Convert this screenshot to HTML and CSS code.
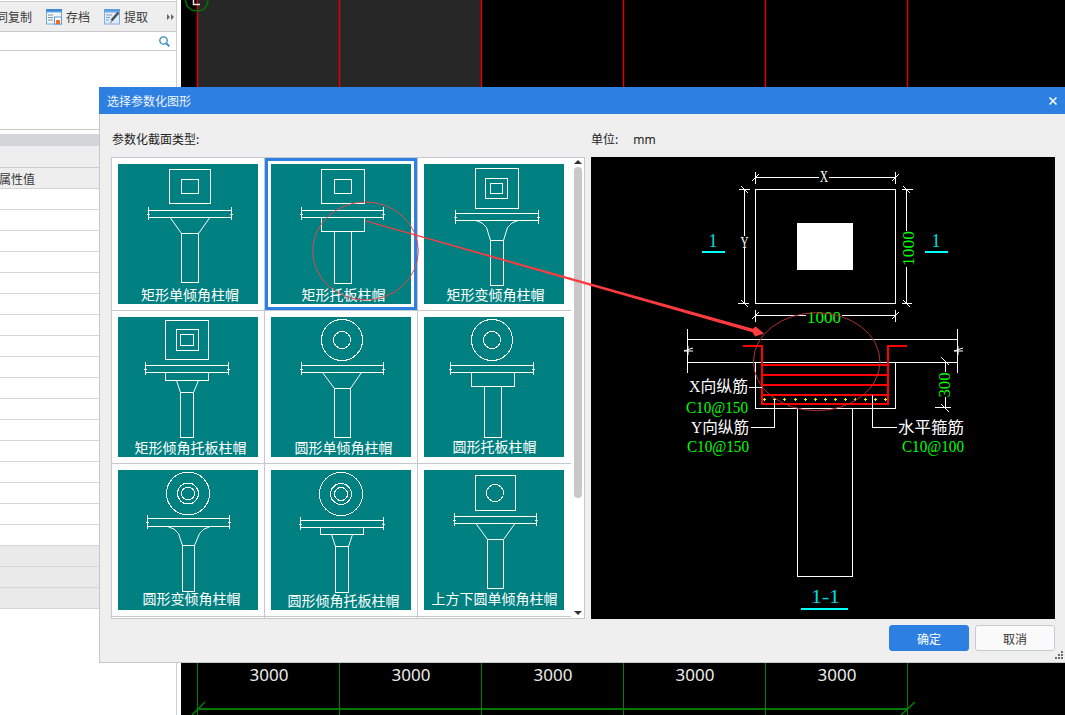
FILE: index.html
```html
<!DOCTYPE html>
<html lang="zh-CN">
<head>
<meta charset="utf-8">
<title>选择参数化图形</title>
<link rel="stylesheet" href="styles.css">
</head>
<body>
<div class="app">
  <aside class="side">
    <div class="side-top"></div>
    <div class="toolbar">
      <span class="tool-text">同复制</span>
      <span class="tool">
        <svg class="tool-icon" viewBox="0 0 16 16" width="16" height="16">
          <rect x="0" y="0" width="16" height="3" fill="#3b8ad9"/>
          <rect x="0.5" y="3" width="15" height="12" fill="#f4f8fc" stroke="#6fa8dc"/>
          <path d="M2 6h5M2 8.5h5M2 11h5" stroke="#7a8a99"/>
          <rect x="8.5" y="8" width="7" height="7" fill="#fff" stroke="#5f9bd3"/>
          <rect x="10" y="11" width="4" height="4" fill="#f26b21"/>
        </svg>
        <span class="tool-text">存档</span>
      </span>
      <span class="tool">
        <svg class="tool-icon" viewBox="0 0 16 16" width="16" height="16">
          <rect x="0" y="0" width="16" height="3" fill="#5b9ee0"/>
          <rect x="0.5" y="3" width="15" height="12" fill="#dfeafa" stroke="#7fb0e0"/>
          <path d="M2 6h6M2 8.5h4M2 11h3" stroke="#8aa0b8"/>
          <path d="M14.5 3.5L7.5 11.5" stroke="#46505c" stroke-width="2.5"/>
          <path d="M7 12l-1 2 2-1z" fill="#46505c"/>
        </svg>
        <span class="tool-text">提取</span>
      </span>
      <span class="tool-more">
        <svg viewBox="0 0 8 8" width="8" height="8"><path d="M0 1l3 3-3 3zM4 1l3 3-3 3z" fill="#666"/></svg>
      </span>
    </div>
    <div class="search">
      <svg viewBox="0 0 11 11" width="11" height="11"><circle cx="4.5" cy="4.5" r="3.7" fill="none" stroke="#2b8bc0" stroke-width="1.3"/><path d="M7.3 7.3L10.3 10.3" stroke="#2b8bc0" stroke-width="1.8"/></svg>
    </div>
    <div class="tree"></div>
    <div class="gap-white"></div>
    <div class="band"></div>
    <div class="spacer-row"></div>
    <div class="head-row"><span class="head-text">属性值</span></div>
    <div class="row"></div><div class="row"></div><div class="row"></div><div class="row"></div>
    <div class="row"></div><div class="row"></div><div class="row"></div><div class="row"></div>
    <div class="row"></div><div class="row"></div><div class="row"></div><div class="row"></div>
    <div class="row"></div><div class="row"></div><div class="row"></div><div class="row"></div>
    <div class="row"></div>
    <div class="row row-grey"></div><div class="row row-grey"></div><div class="row row-grey"></div>
  </aside>
  <div class="gutter"></div>
  <main class="canvas">
    <svg class="cad" viewBox="181 0 884 715" width="884" height="715">
      <rect x="198" y="0" width="283" height="100" fill="#272727"/>
      <path class="cad-red" d="M197.500 0V100M339.500 0V100M481.500 0V100M623.500 0V100M765.500 0V100M907.500 0V100"/>
      <path class="cad-green" d="M184.500 -3L187 6L192 10L197 11L203 10L207 5L208.500 -3"/>
      <path class="cad-l" d="M193.500 0V4.500H200"/>
      <path class="cad-green-v" d="M197.500 663V715M339.500 663V715M481.500 663V715M623.500 663V715M765.500 663V715M907.500 663V715"/>
      <path class="cad-green-h" d="M197 709H908"/>
      <path class="cad-green-t" d="M192 715L205 702M901 715L915 702"/>
      <text class="cad-num" x="269" y="680.500">3000</text>
      <text class="cad-num" x="411" y="680.500">3000</text>
      <text class="cad-num" x="553" y="680.500">3000</text>
      <text class="cad-num" x="695" y="680.500">3000</text>
      <text class="cad-num" x="837" y="680.500">3000</text>
    </svg>
  </main>
</div>

<section class="dialog">
  <header class="dialog-title">
    <span>选择参数化图形</span>
    <svg class="close" viewBox="0 0 8 8" width="8" height="8"><path d="M0.500 0.500L7.500 7.500M7.500 0.500L0.500 7.500" stroke="#fff" stroke-width="1.500"/></svg>
  </header>
  <div class="dialog-body">
    <div class="col-left">
      <div class="label label-left">参数化截面类型:</div>
      <div class="picker">
        <div class="grid">
          <div class="cell">
            <svg class="thumb" viewBox="0 0 140 140" width="140" height="140">
              <path class="ln" d="M51.500 5.500h41v34h-41zM63.500 15.500h17v14h-17zM30.500 46.500h83v7h-83zM30.500 43V56M113.500 43V56M29 50h3M112 50h3M63.500 69.500h17v49h-17z"/>
              <path class="ln-aa" d="M52.500 54L63.500 69.500M91.500 54L80.500 69.500"/>
              <text class="cap" x="72" y="135.500">矩形单倾角柱帽</text>
            </svg>
          </div>
          <div class="cell selected">
            <svg class="thumb" viewBox="0 0 140 140" width="140" height="140">
              <path class="ln" d="M50.500 5.500h43v34h-43zM63.500 15.500h17v14h-17zM30.500 46.500h82v7h-82zM30.500 43V56M112.500 43V56M29 50h3M111 50h3M50.500 53.500h43v14h-43zM63.500 67.500h17v52h-17z"/>
              <text class="cap" x="72.500" y="135.500">矩形托板柱帽</text>
            </svg>
          </div>
          <div class="cell">
            <svg class="thumb" viewBox="0 0 140 140" width="140" height="140">
              <path class="ln" d="M51.500 4.500h43v40h-43zM61.500 14.500h22v20h-22zM66.500 19.500h12v10h-12zM31.500 49.500h83v7h-83zM31.500 46V60M114.500 46V60M30 53h3M113 53h3M66.500 76.500h13v45h-13z"/>
              <path class="ln-aa" d="M52 56.500L58 59L62.500 63.500L66.500 76.500M94 56.500L88 59L83.500 63.500L79.500 76.500"/>
              <text class="cap" x="71.500" y="135.500">矩形变倾角柱帽</text>
            </svg>
          </div>
          <div class="cell">
            <svg class="thumb" viewBox="0 0 140 140" width="140" height="140">
              <path class="ln" d="M47.500 3.500h43v39h-43zM58.500 12.500h22v21h-22zM62.500 17.500h13v11h-13zM27.500 48.500h83v7h-83zM27.500 45V58M110.500 45V58M26 52h3M109 52h3M47.500 55.500h43v8h-43zM62.500 75.500h13v45h-13z"/>
              <path class="ln-aa" d="M58.500 63.500L62.500 75.500M80.500 63.500L75.500 75.500"/>
              <text class="cap" x="72.500" y="135.500">矩形倾角托板柱帽</text>
            </svg>
          </div>
          <div class="cell">
            <svg class="thumb" viewBox="0 0 140 140" width="140" height="140">
              <circle class="ln" cx="71" cy="23" r="20.500"/>
              <circle class="ln" cx="71" cy="23" r="8.500"/>
              <path class="ln" d="M30.500 48.500h82v7h-82zM30.500 45V58M112.500 45V58M29 52h3M111 52h3M63.500 71.500h16v49h-16z"/>
              <path class="ln-aa" d="M51.500 55.500L63.500 71.500M90.500 55.500L79.500 71.500"/>
              <text class="cap" x="72.500" y="135.500">圆形单倾角柱帽</text>
            </svg>
          </div>
          <div class="cell">
            <svg class="thumb" viewBox="0 0 140 140" width="140" height="140">
              <circle class="ln" cx="68" cy="23" r="20.500"/>
              <circle class="ln" cx="68" cy="23" r="8.500"/>
              <path class="ln" d="M26.500 48.500h83v7h-83zM26.500 45V58M109.500 45V58M25 52h3M108 52h3M47.500 55.500h43v14h-43zM60.500 69.500h17v51h-17z"/>
              <text class="cap" x="70.500" y="135">圆形托板柱帽</text>
            </svg>
          </div>
          <div class="cell">
            <svg class="thumb" viewBox="0 0 140 140" width="140" height="140">
              <circle class="ln" cx="70" cy="23.500" r="21.500"/>
              <circle class="ln" cx="70" cy="23.500" r="10.500"/>
              <circle class="ln" cx="70" cy="23.500" r="6.500"/>
              <path class="ln" d="M29.500 48.500h82v8h-82zM29.500 45V59M111.500 45V59M28 52h3M110 52h3M64.500 75.500h12v46h-12z"/>
              <path class="ln-aa" d="M50.500 57L56 59L60.500 63.500L64.500 75.500M91.500 57L86 59L81.500 63.500L76.500 75.500"/>
              <text class="cap" x="73.500" y="134">圆形变倾角柱帽</text>
            </svg>
          </div>
          <div class="cell">
            <svg class="thumb" viewBox="0 0 140 140" width="140" height="140">
              <circle class="ln" cx="70" cy="24" r="21.500"/>
              <circle class="ln" cx="70" cy="24" r="10.500"/>
              <circle class="ln" cx="70" cy="24" r="6.500"/>
              <path class="ln" d="M29.500 50.500h83v7h-83zM29.500 47V60M112.500 47V60M28 54h3M111 54h3M49.500 57.500h43v7h-43zM64.500 76.500h13v46h-13z"/>
              <path class="ln-aa" d="M60.500 64.500L64.500 76.500M81.500 64.500L77.500 76.500"/>
              <text class="cap" x="72.500" y="136">圆形倾角托板柱帽</text>
            </svg>
          </div>
          <div class="cell">
            <svg class="thumb" viewBox="0 0 140 140" width="140" height="140">
              <path class="ln" d="M51.500 5.500h40v35h-40zM30.500 46.500h82v7h-82zM30.500 43V56M112.500 43V56M29 50h3M111 50h3M63.500 69.500h16v49h-16z"/>
              <circle class="ln" cx="71" cy="23" r="8.500"/>
              <path class="ln-aa" d="M52 53.500L63.500 69.500M91 53.500L79.500 69.500"/>
              <text class="cap" x="70.500" y="134">上方下圆单倾角柱帽</text>
            </svg>
          </div>
          <div class="cell"></div>
          <div class="cell"></div>
          <div class="cell"></div>
        </div>
        <div class="scroll">
          <span class="arrow-up"></span>
          <span class="scroll-thumb"></span>
          <span class="arrow-down"></span>
        </div>
      </div>
    </div>
    <div class="col-right">
      <div class="label"><span class="unit-key">单位:</span><span class="unit-val">mm</span></div>
      <svg class="preview" viewBox="591 157 464 462" width="464" height="462">
        <path class="w" d="M755.500 189.500h140v114h-140z"/>
        <rect x="797" y="223" width="56" height="47" fill="#fff"/>
        <path class="w" d="M755.500 177.500h63M829 177.500h66.500M755.500 172V184M895.500 172V184M752 181L759 174M892 181L899 174"/>
        <path class="w" d="M744.500 189.500V236M744.500 248V303.500M739 189.500h11M738 303.500h11M741 186L748 193M741 300L748 307"/>
        <path class="w" d="M906.500 189.500V231M906.500 267V303.500M902 189.500h11M902 303.500h10M903 186L910 193M903 300L910 307"/>
        <path class="w" d="M755.500 315.500H806M842 315.500H895.500M755.500 310V322M895.500 310V322M752 319L759 312M892 319L899 312"/>
        <text class="t-w" x="820" y="182" textLength="8" lengthAdjust="spacingAndGlyphs">X</text>
        <text class="t-w" x="740.500" y="248" textLength="8" lengthAdjust="spacingAndGlyphs">Y</text>
        <text class="t-g" x="807" y="322.500" textLength="34" lengthAdjust="spacingAndGlyphs">1000</text>
        <text class="t-g" transform="translate(913.500 266) rotate(-90)" x="0" y="0" textLength="35" lengthAdjust="spacingAndGlyphs">1000</text>
        <text class="t-c t-mid" x="713" y="247">1</text>
        <text class="t-c t-mid" x="936" y="247">1</text>
        <path class="c" d="M702 251.500h23M925 251.500h23M801 608.500h47"/>
        <path class="w" d="M687.500 339.500h270M687.500 362.500h270M687.500 329V373M957.500 329V373"/>
        <path class="wa" d="M693 348L684 351H693M688 346L688 355M963 348L954 351H963M958 346L958 355"/>
        <path class="w" d="M755.500 362.500V408.500H895.500V362.500M797.500 408.500V576.500H852.500V408.500"/>
        <path class="r" d="M743 345.500H762V403.500H888V345.500H907M762 365H888M762 375H888M762 385H888M762 394.500H888"/>
        <path class="y" d="M762.500 399.500h3M764 398v3M772.500 399.500h3M774 398v3M782.500 399.500h3M784 398v3M793.500 399.500h3M795 398v3M803.500 399.500h3M805 398v3M813.500 399.500h3M815 398v3M823.500 399.500h3M825 398v3M833.500 399.500h3M835 398v3M843.500 399.500h3M845 398v3M853.500 399.500h3M855 398v3M863.500 399.500h3M865 398v3M873.500 399.500h3M875 398v3M883.500 399.500h3M885 398v3"/>
        <path class="w" d="M749 387.500H762M751 427.500H774.500V399M872.500 394.500V427.500H896.500"/>
        <path class="w" d="M945.500 362V372M945.500 397V408M935 407.500H951M941 357L949 365M941 404L949 412M940 362.500h17"/>
        <text class="t-g" transform="translate(950 397.500) rotate(-90)" x="0" y="0" textLength="25" lengthAdjust="spacingAndGlyphs">300</text>
        <text class="t-w" x="689" y="392" textLength="59" lengthAdjust="spacingAndGlyphs">X向纵筋</text>
        <text class="t-g" x="686" y="412.500" textLength="62" lengthAdjust="spacingAndGlyphs">C10@150</text>
        <text class="t-w" x="691" y="432.500" textLength="58" lengthAdjust="spacingAndGlyphs">Y向纵筋</text>
        <text class="t-g" x="687" y="451.500" textLength="62" lengthAdjust="spacingAndGlyphs">C10@150</text>
        <text class="t-w" x="898" y="432.500" textLength="66" lengthAdjust="spacingAndGlyphs">水平箍筋</text>
        <text class="t-g" x="902" y="451.500" textLength="62" lengthAdjust="spacingAndGlyphs">C10@100</text>
        <text class="t-c" x="811" y="603" textLength="29" lengthAdjust="spacingAndGlyphs">1-1</text>
      </svg>
    </div>
  </div>
  <footer class="dialog-foot">
    <button class="btn btn-primary" type="button">确定</button>
    <button class="btn" type="button">取消</button>
  </footer>
  <svg class="grip" viewBox="0 0 8 8" width="8" height="8"><path d="M6 0h2v2H6zM3 3h2v2H3zM6 3h2v2H6zM0 6h2v2H0zM3 6h2v2H3zM6 6h2v2H6z" fill="#6b6b6b"/></svg>
</section>

<svg class="markup" viewBox="0 0 1065 715" width="1065" height="715">
  <ellipse class="mark-ring" cx="365.500" cy="251" rx="52.800" ry="49"/>
  <ellipse class="mark-ring mark-dark" cx="816.700" cy="361.700" rx="63.300" ry="49"/>
  <path class="mark-arrow" d="M365 220.200L365 221.200L752.500 332.200L755 336.500L764 333.500L755.500 326.500L753 328.800Z"/>
</svg>
</body>
</html>
```
FILE: styles.css
```css
* { box-sizing: border-box; }
html, body { margin: 0; padding: 0; height: 100%; overflow: hidden; background: #fff; }
body { position: relative; width: 1065px; height: 715px; font-family: "Noto Sans CJK SC", "Liberation Sans", sans-serif; font-size: 12px; color: #333; }

.app { display: flex; height: 715px; }
.side { width: 177px; flex: none; border-right: 1px solid #ccced2; overflow: hidden; background: #fff; }
.gutter { width: 4px; flex: none; background: #fff; }
.canvas { flex: 1; background: #000; overflow: hidden; min-width: 0; }
.cad { display: block; }

.side-top { height: 2px; border-bottom: 1px solid #ccc; }
.toolbar { height: 30px; display: flex; align-items: center; justify-content: flex-end; padding-right: 1px; background: #eee; border-bottom: 1px solid #c8c8c8; white-space: nowrap; overflow: hidden; }
.tool { display: flex; align-items: center; gap: 4px; margin-left: 14px; flex: none; }
.tool-text { flex: none; color: #3a3a3a; line-height: 16px; }
.tool-icon { display: block; }
.tool-more { margin-left: 19px; width: 8px; display: flex; flex: none; }
.search { height: 19px; display: flex; align-items: center; justify-content: flex-end; padding-right: 6px; background: #fff; border-bottom: 1px solid #ccc; }
.tree { height: 79px; border-bottom: 1px solid #ccc; }
.gap-white { height: 4px; }
.band { height: 12px; background: #d4d5d9; }
.spacer-row { height: 22px; background: #eee; border-bottom: 1px solid #ccc; }
.head-row { height: 21px; background: #eee; border-bottom: 1px solid #d4d4d4; display: flex; align-items: center; }
.head-text { margin-left: -1px; color: #3a3a3a; }
.row { height: 21px; border-bottom: 1px solid #d6d6d6; background: #fff; }
.row-grey { background: #eaeaea; }

.dialog { position: absolute; left: 99px; top: 87px; width: 966px; height: 576px; background: #efefef; border-left: 1px solid #c3c8d3; border-bottom: 1px solid #c3c8d3; display: flex; flex-direction: column; }
.dialog-title { height: 27px; flex: none; background: #2d7fe2; color: #eef5fd; display: flex; align-items: center; justify-content: space-between; padding: 0 8px; margin-left: -1px; line-height: 27px; }
.close { display: block; }
.dialog-body { display: flex; gap: 6px; padding: 0 10px 0 11px; flex: none; }
.label { height: 43px; padding-top: 16px; line-height: 18px; color: #222; }
.label-left { padding-left: 1px; }
.col-left { width: 474px; flex: none; }
.col-right { width: 464px; flex: none; }
.unit-val { margin-left: 15px; font-family: "Noto Sans", sans-serif; font-size: 12px; }

.picker { width: 474px; height: 462px; border: 1px solid #c6c8cd; background: #fff; display: flex; overflow: hidden; }
.grid { width: 459px; height: 460px; flex: none; overflow: hidden; display: grid; grid-template-columns: repeat(3, 153px); grid-auto-rows: 153px; }
.cell { padding: 6px; border-right: 1px solid #c6c8cd; border-bottom: 1px solid #c6c8cd; }
.cell:nth-child(3n) { border-right: 0; }
.cell.selected { box-shadow: inset 0 0 0 3px #2d7fe2; }
.thumb { display: block; background: #008080; }
.ln { fill: none; stroke: #fff; stroke-width: 1; shape-rendering: crispEdges; }
.ln-aa { fill: none; stroke: #fff; stroke-width: 1; }
.cap { fill: #fff; font-size: 14px; text-anchor: middle; font-family: "Noto Sans CJK SC", sans-serif; }

.scroll { flex: 1; display: flex; flex-direction: column; align-items: center; position: relative; }
.scroll-thumb { width: 8px; height: 331px; margin-top: 3px; border-radius: 4px; background: #c8c8c8; }
.arrow-up { margin-top: 2px; width: 0; height: 0; border-left: 4px solid transparent; border-right: 4px solid transparent; border-bottom: 4px solid #333; }
.arrow-down { margin-top: 113px; width: 0; height: 0; border-left: 4px solid transparent; border-right: 4px solid transparent; border-top: 4px solid #333; }

.preview { display: block; background: #000; }
.w { fill: none; stroke: #fff; stroke-width: 1; shape-rendering: crispEdges; }
.wa { fill: none; stroke: #fff; stroke-width: 1; }
.c { fill: none; stroke: #00ffff; stroke-width: 2; shape-rendering: crispEdges; }
.r { fill: none; stroke: #ff0000; stroke-width: 2; shape-rendering: crispEdges; }
.y { fill: none; stroke: #ffff00; stroke-width: 1; shape-rendering: crispEdges; }
.t-w, .t-g, .t-c { font-family: "Liberation Serif", "Noto Sans CJK SC", serif; font-size: 16px; }
.t-w { fill: #fff; }
.t-g { fill: #00ff00; }
.t-c { fill: #00dcdc; font-size: 18px; }
.t-mid { text-anchor: middle; }

.dialog-foot { display: flex; justify-content: flex-end; gap: 6px; padding: 6px 10px 0 0; }
.btn { width: 80px; height: 26px; padding: 0; border: 1px solid #c6cbd6; border-radius: 3px; background: #fafafa; color: #333; font: 12px "Noto Sans CJK SC", sans-serif; }
.btn-primary { background: #2d7fe2; border-color: #2d7fe2; color: #fff; }
.grip { position: absolute; right: 2px; bottom: 3px; display: block; }

.cad-red { fill: none; stroke: #e00000; stroke-width: 1.500; }
.cad-green { fill: none; stroke: #007000; stroke-width: 1.5; }
.cad-l { fill: none; stroke: #e8e8e8; stroke-width: 1.500; }
.cad-green-v { fill: none; stroke: #008000; stroke-width: 1; shape-rendering: crispEdges; }
.cad-green-h { fill: none; stroke: #007800; stroke-width: 2; shape-rendering: crispEdges; }
.cad-green-t { fill: none; stroke: #008000; stroke-width: 1.500; }
.cad-num { fill: #ececec; font-family: "Noto Sans", sans-serif; font-size: 17px; text-anchor: middle; }

.markup { position: absolute; left: 0; top: 0; pointer-events: none; }
.mark-ring { fill: none; stroke: #e0484c; stroke-width: 1; }
.mark-dark { stroke: #b03034; }
.mark-arrow { fill: #ff3b40; stroke: none; }
```
